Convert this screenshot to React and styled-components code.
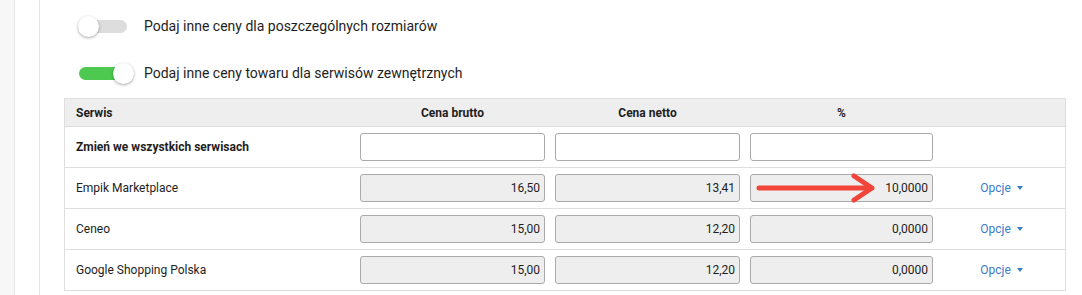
import React from "react";
import styled, { createGlobalStyle } from "styled-components";

const GlobalStyle = createGlobalStyle`
  html, body {
    margin: 0;
    padding: 0;
    background: #fff;
    font-family: Roboto, "Liberation Sans", Arial, sans-serif;
    color: #222;
  }
`;

const rows = [
  { name: "Empik Marketplace", brutto: "16,50", netto: "13,41", pct: "10,0000", arrow: true },
  { name: "Ceneo", brutto: "15,00", netto: "12,20", pct: "0,0000" },
  { name: "Google Shopping Polska", brutto: "15,00", netto: "12,20", pct: "0,0000" },
];

function Toggle({ on }) {
  return (
    <Track on={on ? 1 : 0}>
      <Knob on={on ? 1 : 0} />
    </Track>
  );
}

function RedArrow() {
  return (
    <ArrowSvg width="124" height="32" viewBox="0 0 124 32">
      <path d="M4 16 H116" stroke="#f2453a" strokeWidth="5" strokeLinecap="round" fill="none" />
      <path d="M99 4 L117 16 L99 28" stroke="#f2453a" strokeWidth="5" strokeLinecap="round" strokeLinejoin="round" fill="none" />
    </ArrowSvg>
  );
}

export default function App() {
  return (
    <>
      <GlobalStyle />
      <Page>
        <Sidebar />
        <Gutter />
        <Content>
          <Switches>
            <SwitchRow>
              <Toggle />
              <Label>Podaj inne ceny dla poszczególnych rozmiarów</Label>
            </SwitchRow>
            <SwitchRow>
              <Toggle on />
              <Label>Podaj inne ceny towaru dla serwisów zewnętrznych</Label>
            </SwitchRow>
          </Switches>
          <Table>
            <HeadRow>
              <HeadCell>Serwis</HeadCell>
              <HeadCell center>Cena brutto</HeadCell>
              <HeadCell center>Cena netto</HeadCell>
              <HeadCell center>%</HeadCell>
              <HeadCell />
            </HeadRow>
            <Row>
              <NameCell bold>Zmień we wszystkich serwisach</NameCell>
              <InputCell><Field /></InputCell>
              <InputCell><Field /></InputCell>
              <InputCell><Field /></InputCell>
              <Cell />
            </Row>
            {rows.map((r) => (
              <Row key={r.name}>
                <NameCell>{r.name}</NameCell>
                <InputCell><Field disabled>{r.brutto}</Field></InputCell>
                <InputCell><Field disabled>{r.netto}</Field></InputCell>
                <InputCell>
                  <Field disabled>{r.pct}</Field>
                  {r.arrow && <RedArrow />}
                </InputCell>
                <OptionsCell>
                  <Options>
                    Opcje <Caret />
                  </Options>
                </OptionsCell>
              </Row>
            ))}
          </Table>
        </Content>
      </Page>
    </>
  );
}

const Page = styled.div`
  display: flex;
  width: 1082px;
  height: 295px;
  overflow: hidden;
`;

const Sidebar = styled.div`
  width: 14px;
  flex: none;
  background: #f7f7f7;
  border-right: 1px solid #e4e4e4;
`;

const Gutter = styled.div`
  width: 24px;
  flex: none;
  background: #fff;
  border-right: 1px solid #e4e4e4;
`;

const Content = styled.div`
  flex: 1;
  padding: 15px 18px 0 24px;
`;

const Switches = styled.div`
  display: flex;
  flex-direction: column;
  gap: 25px;
  padding-left: 14px;
`;

const SwitchRow = styled.div`
  display: flex;
  align-items: center;
  height: 22px;
`;

const Track = styled.div`
  position: relative;
  width: 48px;
  height: 13px;
  margin-left: 1px;
  margin-right: 17px;
  border-radius: 7px;
  background: ${(p) => (p.on ? "#4cc94e" : "#dddddd")};
`;

const Knob = styled.div`
  position: absolute;
  top: -4px;
  left: ${(p) => (p.on ? "34px" : "-1px")};
  width: 21px;
  height: 21px;
  border-radius: 50%;
  background: #fff;
  box-shadow: 0 1px 3px rgba(0, 0, 0, 0.35);
`;

const Label = styled.span`
  font-size: 14px;
  color: #1e1e1e;
`;

const Table = styled.div`
  margin-top: 14px;
  width: 1000px;
  border-top: 1px solid #dedede;
  border-left: 1px solid #dedede;
  border-right: 1px solid #dedede;
`;

const cols = "290px 195px 195px 193px 1fr";

const HeadRow = styled.div`
  display: grid;
  grid-template-columns: ${cols};
  height: 27px;
  background: #eeeeee;
  border-bottom: 1px solid #dedede;
`;

const HeadCell = styled.div`
  display: flex;
  align-items: center;
  justify-content: ${(p) => (p.center ? "center" : "flex-start")};
  padding-left: ${(p) => (p.center ? "0" : "11px")};
  font-size: 12px;
  font-weight: 700;
  color: #1e1e1e;
`;

const Row = styled.div`
  display: grid;
  grid-template-columns: ${cols};
  height: 40px;
  border-bottom: 1px solid #dedede;
`;

const Cell = styled.div`
  display: flex;
  align-items: center;
`;

const NameCell = styled(Cell)`
  padding-left: 11px;
  font-size: 12px;
  font-weight: ${(p) => (p.bold ? 700 : 400)};
  color: #1e1e1e;
`;

const InputCell = styled(Cell)`
  position: relative;
  padding: 0 5px;
`;

const Field = styled.div`
  flex: 1;
  height: 28px;
  box-sizing: border-box;
  display: flex;
  align-items: center;
  justify-content: flex-end;
  padding-right: 4px;
  border: 1px solid #aaaaaa;
  border-radius: 3px;
  background: ${(p) => (p.disabled ? "#eeeeee" : "#fff")};
  font-size: 12px;
  color: #1e1e1e;
`;

const ArrowSvg = styled.svg`
  position: absolute;
  left: 10px;
  top: 4px;
`;

const OptionsCell = styled(Cell)`
  justify-content: center;
`;

const Options = styled.span`
  display: inline-flex;
  align-items: center;
  gap: 6px;
  font-size: 12px;
  color: #3b7cc9;
`;

const Caret = styled.span`
  width: 0;
  height: 0;
  border-left: 3.5px solid transparent;
  border-right: 3.5px solid transparent;
  border-top: 4px solid #3b7cc9;
`;
